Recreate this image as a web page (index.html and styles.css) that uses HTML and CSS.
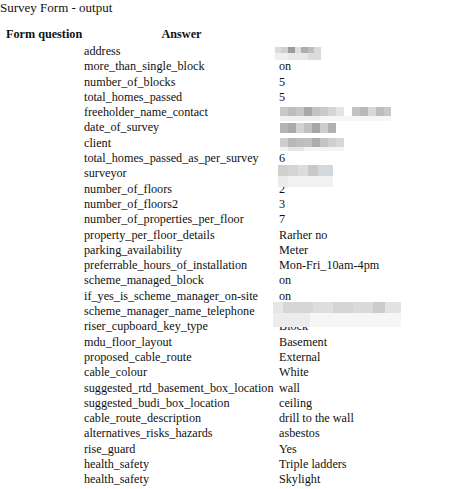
FILE: index.html
```html
<!DOCTYPE html>
<html>
<head>
<meta charset="utf-8">
<title>Survey Form - output</title>
<link rel="stylesheet" href="styles.css">
</head>
<body>
<div class="page">
  <div class="title">Survey Form - output</div>
  <table class="survey">
    <colgroup><col class="c1"><col class="c2"><col class="c3"></colgroup>
    <thead>
      <tr><th class="q-head">Form question</th><th class="a-head">Answer</th><th></th></tr>
    </thead>
    <tbody>
      <tr><td></td><td>address</td><td></td></tr>
      <tr><td></td><td>more_than_single_block</td><td>on</td></tr>
      <tr><td></td><td>number_of_blocks</td><td>5</td></tr>
      <tr><td></td><td>total_homes_passed</td><td>5</td></tr>
      <tr><td></td><td>freeholder_name_contact</td><td></td></tr>
      <tr><td></td><td>date_of_survey</td><td></td></tr>
      <tr><td></td><td>client</td><td></td></tr>
      <tr><td></td><td>total_homes_passed_as_per_survey</td><td>6</td></tr>
      <tr><td></td><td>surveyor</td><td>T</td></tr>
      <tr><td></td><td>number_of_floors</td><td>2</td></tr>
      <tr><td></td><td>number_of_floors2</td><td>3</td></tr>
      <tr><td></td><td>number_of_properties_per_floor</td><td>7</td></tr>
      <tr><td></td><td>property_per_floor_details</td><td>Rarher no</td></tr>
      <tr><td></td><td>parking_availability</td><td>Meter</td></tr>
      <tr><td></td><td>preferrable_hours_of_installation</td><td>Mon-Fri_10am-4pm</td></tr>
      <tr><td></td><td>scheme_managed_block</td><td>on</td></tr>
      <tr><td></td><td>if_yes_is_scheme_manager_on-site</td><td>on</td></tr>
      <tr><td></td><td>scheme_manager_name_telephone</td><td></td></tr>
      <tr><td></td><td>riser_cupboard_key_type</td><td>Block</td></tr>
      <tr><td></td><td>mdu_floor_layout</td><td>Basement</td></tr>
      <tr><td></td><td>proposed_cable_route</td><td>External</td></tr>
      <tr><td></td><td>cable_colour</td><td>White</td></tr>
      <tr><td></td><td>suggested_rtd_basement_box_location</td><td>wall</td></tr>
      <tr><td></td><td>suggested_budi_box_location</td><td>ceiling</td></tr>
      <tr><td></td><td>cable_route_description</td><td>drill to the wall</td></tr>
      <tr><td></td><td>alternatives_risks_hazards</td><td>asbestos</td></tr>
      <tr><td></td><td>rise_guard</td><td>Yes</td></tr>
      <tr><td></td><td>health_safety</td><td>Triple ladders</td></tr>
      <tr><td></td><td>health_safety</td><td>Skylight</td></tr>
    </tbody>
  </table>
  <div class="redact r-address"></div>
  <div class="redact r-freeholder"></div>
  <div class="redact r-date"></div>
  <div class="redact r-client"></div>
  <div class="redact r-surveyor"></div>
  <div class="redact r-scheme"></div>
</div>
</body>
</html>
```

FILE: styles.css
```css
html, body {
  margin: 0;
  padding: 0;
  background: #ffffff;
}

body {
  font-family: "Liberation Serif", "Times New Roman", serif;
  font-size: 12.2px;
  color: #111111;
}

.page {
  position: relative;
  width: 474px;
  height: 489px;
  overflow: hidden;
}

.title {
  font-size: 13px;
  line-height: normal;
  height: 24px;
}

.survey {
  border-collapse: collapse;
  margin-left: 6px;
  table-layout: fixed;
}

.c1 { width: 78px; }
.c2 { width: 195px; }
.c3 { width: 190px; }

.survey th,
.survey td {
  padding: 0;
  white-space: nowrap;
}

.survey th {
  height: 20px;
  line-height: 20px;
  font-weight: bold;
}

.q-head { text-align: left; }
.a-head { text-align: center; padding-right: 4px; }

.survey td {
  height: 15.3px;
  line-height: 15.3px;
  text-align: left;
}

.redact {
  position: absolute;
  filter: blur(0.6px);
}

.r-address {
  left: 275px; top: 47px; width: 53px; height: 13px;
  background:
    linear-gradient(90deg, #dcdcdc 0 6px, #cfcfcf 6px 13px, #9c9c9c 13px 20px, #dedede 20px 26px, #adadad 26px 33px, #bdbdbd 33px 39px, #dadada 39px 46px, transparent 46px) top / 100% 6px no-repeat,
    linear-gradient(90deg, #efefef 0 13px, #e8e8e8 13px 33px, #dcdcdc 33px 46px, transparent 46px) bottom / 100% 7px no-repeat;
}

.r-freeholder {
  left: 280px; top: 107px; width: 111px; height: 14px;
  background:
    linear-gradient(90deg, #c8c8c8 0 8px, #bdbdbd 8px 16px, #c6c6c6 16px 24px, #a8a8a8 24px 32px, #c4c4c4 32px 40px, #cacaca 40px 48px, #d6d6d6 48px 56px, #e4e4e4 56px 64px, #ffffff 64px 72px, #c2c2c2 72px 80px, #b8b8b8 80px 88px, #d8d8d8 88px 96px, #bdbdbd 96px 104px, #c8c8c8 104px 111px) top / 100% 9px no-repeat,
    linear-gradient(90deg, #f0f0f0 0 40px, #f6f6f6 40px 111px) bottom / 100% 5px no-repeat;
}

.r-date {
  left: 280px; top: 123px; width: 56px; height: 10px;
  background: linear-gradient(90deg, #b4b4b4 0 8px, #aaaaaa 8px 16px, #d2d2d2 16px 24px, #c0c0c0 24px 32px, #a6a6a6 32px 40px, #cccccc 40px 48px, #b0b0b0 48px 56px);
}

.r-client {
  left: 280px; top: 138px; width: 64px; height: 13px;
  background:
    linear-gradient(90deg, #cdcdcd 0 8px, #b8b8b8 8px 16px, #bdbdbd 16px 24px, #c0c0c0 24px 32px, #acacac 32px 40px, #c4c4c4 40px 48px, #d0d0d0 48px 56px, #d8d8d8 56px 64px) top / 100% 9px no-repeat,
    linear-gradient(90deg, #f2f2f2 0 8px, #e6e6e6 8px 24px, #f4f4f4 24px 64px) bottom / 100% 4px no-repeat;
}

.r-surveyor {
  left: 278px; top: 165px; width: 55px; height: 22px;
  background:
    linear-gradient(90deg, #cfcfcf 0 10px, #d4d4d4 10px 20px, #dcdcdc 20px 30px, #c9c9c9 30px 40px, #d3d8dc 40px 55px) top / 100% 11px no-repeat,
    linear-gradient(90deg, #ebebeb 0 10px, #f1f1f1 10px 55px) bottom / 100% 11px no-repeat;
}

.r-scheme {
  left: 273px; top: 302px; width: 128px; height: 25px;
  background:
    linear-gradient(90deg, #e6e6e6 0 10px, #d6d6d6 10px 40px, #dedede 40px 60px, #d4d4d4 60px 80px, #dadada 80px 100px, #cccccc 100px 112px, #e2e2e2 112px 128px) top / 100% 11px no-repeat,
    linear-gradient(90deg, #ececec 0 37px, #f6f6f6 37px 128px) bottom / 100% 14px no-repeat;
}
```
